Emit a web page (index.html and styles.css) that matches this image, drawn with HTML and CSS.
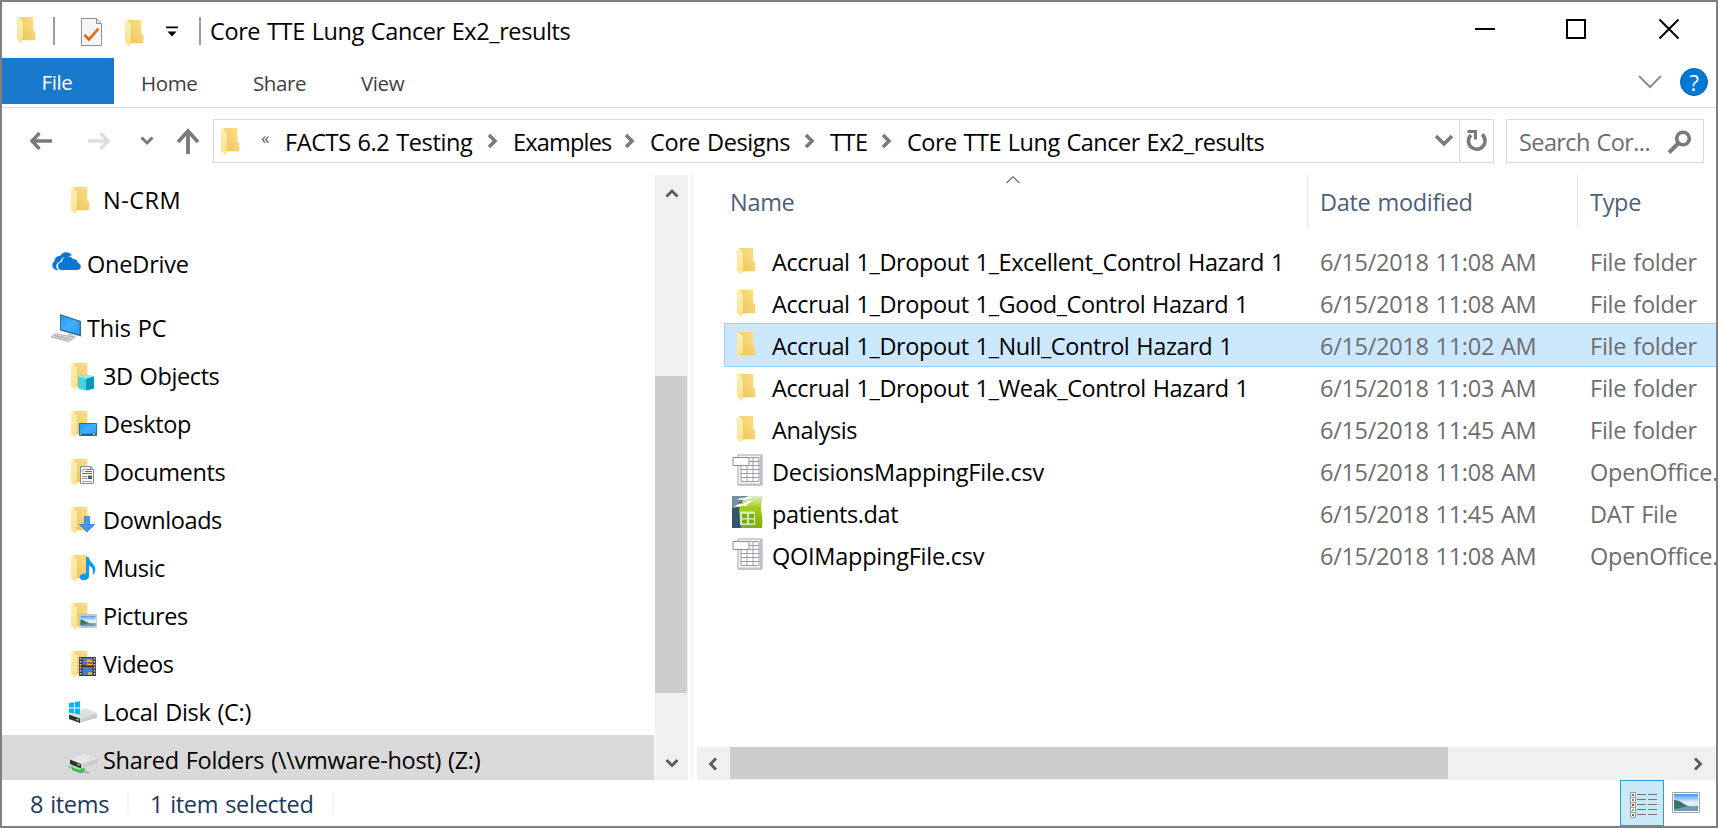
FILE: index.html
```html
<!DOCTYPE html>
<html lang="en">
<head>
<meta charset="utf-8">
<title>Core TTE Lung Cancer Ex2_results</title>
<link rel="stylesheet" href="styles.css">
</head>
<body>
<svg class="defs" width="0" height="0">
  <defs>
    <linearGradient id="gBack" x1="0" y1="1" x2="1" y2="0"><stop offset="0" stop-color="#e9c158"/><stop offset="1" stop-color="#ffe08a"/></linearGradient>
    <linearGradient id="gFront" x1="0" y1="0" x2="0" y2="1"><stop offset="0" stop-color="#ffeeb4"/><stop offset="1" stop-color="#ffe08c"/></linearGradient>
    <linearGradient id="gSky" x1="0" y1="0" x2="0" y2="1"><stop offset="0" stop-color="#4a93f0"/><stop offset=".5" stop-color="#e4f1fb"/><stop offset="1" stop-color="#c6dff2"/></linearGradient>
    <linearGradient id="gGreen" x1="0" y1="0" x2="0" y2="1"><stop offset="0" stop-color="#dfeccb"/><stop offset=".35" stop-color="#a3cf1c"/><stop offset="1" stop-color="#7fae12"/></linearGradient>
    <linearGradient id="gScreen" x1="0" y1="0" x2="1" y2="1"><stop offset="0" stop-color="#1a9bfb"/><stop offset=".5" stop-color="#43b0ff"/><stop offset="1" stop-color="#1a9bfb"/></linearGradient>
    <linearGradient id="gDisk" x1="0" y1="0" x2="1" y2="1"><stop offset="0" stop-color="#e2e3e5"/><stop offset="1" stop-color="#b4b6b8"/></linearGradient>
  </defs>
  <symbol id="folder" viewBox="0 0 19 27"><path d="M1 0H16.300V13L18.300 15V23.300H4V2z" fill="url(#gBack)"/><path d="M0 0L6 4.500V21.500L5 22.500V27L0 23z" fill="url(#gFront)"/></symbol>
  <symbol id="picture" viewBox="0 0 28 21"><path d="M.5.5h27v20H.5z" fill="#fff" stroke="#a3a3a3"/><path d="M2 2h24v17H2z" fill="url(#gSky)"/><path d="M2 8q5 0 10 4t14 2v1H2z" fill="#37785b"/><path d="M2 14.500h24V19H2z" fill="#6b9cba"/><path d="M2 14.500h12l-8 2H2z" fill="#386c6b"/></symbol>
  <symbol id="csv" viewBox="0 0 30 32">
    <path d="M5.500 1h24v30h-24z" fill="#f8f9fa" stroke="#a1a4a7"/><path d="M28.500 2v28.500h-23" fill="none" stroke="#bfc2c5" stroke-width="2"/>
    <path d="M8 12h19v16H8z" fill="#fff"/><path d="M17 3.500h9.500v24h-18V12M8 15.500h19M8 19.500h19M8 23.500h19M17 7.500h10M17 11.500h10M14.500 12v16M20.500 4v24" fill="none" stroke="#969fa9"/>
    <path d="M.5 3.500h16v8H.5z" fill="#fff" stroke="#8e8e8e"/>
  </symbol>
  <symbol id="angle" viewBox="0 0 12 16"><path d="M2 2l6 6-6 6" fill="none" stroke="#7a7a7a" stroke-width="3.600"/></symbol>
</svg>

<div class="window">
  <header class="titlebar">
    <svg class="ic folder t1"><use href="#folder"/></svg>
    <i class="bar b1"></i>
    <svg class="t2" width="22" height="30" viewBox="0 0 22 30"><path d="M.5 1.500h15l5 5v22H.5z" fill="#f4f7f9" stroke="#8f8f8f"/><path d="M15.500 1.500v5h5" fill="#dfe3e6" stroke="#8f8f8f"/><path d="M3.500 18l4.500 4.500L17.500 11.500" fill="none" stroke="#fa5c12" stroke-width="2.600"/></svg>
    <svg class="ic folder t3"><use href="#folder"/></svg>
    <svg class="t4" width="12" height="12" viewBox="0 0 12 12"><path d="M0 .500h12v1.800H0zM1.500 5.500h9L6 10.500z" fill="#000"/></svg>
    <i class="bar b2"></i>
    <h1 class="title">Core TTE Lung Cancer Ex2_results</h1>
    <div class="controls">
      <svg width="22" height="24" viewBox="0 0 22 24"><path d="M1 13h20" stroke="#000" stroke-width="2"/></svg>
      <svg width="22" height="24" viewBox="0 0 22 24"><path d="M1 4h18v18H1z" fill="none" stroke="#000" stroke-width="2"/></svg>
      <svg width="22" height="24" viewBox="0 0 22 24"><path d="M1.500 3.500l19 19M20.500 3.500l-19 19" stroke="#000" stroke-width="2"/></svg>
    </div>
  </header>
  <nav class="ribbon">
    <span class="file">File</span><span class="tab home">Home</span><span class="tab share">Share</span><span class="tab view">View</span>
    <svg class="expand" width="24" height="14" viewBox="0 0 24 14"><path d="M1 1l11 11L23 1" fill="none" stroke="#8e8e8e" stroke-width="2"/></svg>
    <span class="help">?</span>
  </nav>
  <div class="navbar">
    <div class="arrows">
      <svg width="24" height="20" viewBox="0 0 24 20"><path d="M23 10H4M10.500 2L3 10l7.500 8" fill="none" stroke="#7a7a7a" stroke-width="3.400"/></svg>
      <svg width="24" height="20" viewBox="0 0 24 20"><path d="M1 10h19M13.500 2l7.500 8-7.500 8" fill="none" stroke="#dedede" stroke-width="3.400"/></svg>
      <svg width="14" height="10" viewBox="0 0 14 10"><path d="M1.500 1.500L7 7l5.500-5.500" fill="none" stroke="#7a7a7a" stroke-width="3"/></svg>
      <svg width="24" height="26" viewBox="0 0 24 26"><path d="M12 26V4M2 14L12 3l10 11" fill="none" stroke="#7a7a7a" stroke-width="3.800"/></svg>
    </div>
    <div class="address">
      <svg class="ic folder"><use href="#folder"/></svg>
      <span class="more">«</span>
      <span class="crumb c1">FACTS 6.2 Testing</span><svg class="ang"><use href="#angle"/></svg>
      <span class="crumb c2">Examples</span><svg class="ang"><use href="#angle"/></svg>
      <span class="crumb c3">Core Designs</span><svg class="ang"><use href="#angle"/></svg>
      <span class="crumb c4">TTE</span><svg class="ang"><use href="#angle"/></svg>
      <span class="crumb c5">Core TTE Lung Cancer Ex2_results</span>
      <svg class="drop" width="20" height="14" viewBox="0 0 20 14"><path d="M2 2l8 8 8-8" fill="none" stroke="#7a7a7a" stroke-width="3.600"/></svg>
      <span class="refresh"><svg width="22" height="24" viewBox="0 0 22 24"><path d="M16 5.500A8.300 8.300 0 1 1 5 6" fill="none" stroke="#7a7a7a" stroke-width="3.600"/><path d="M1.500 2.500H9.500V10.500" fill="none" stroke="#7a7a7a" stroke-width="3"/></svg></span>
    </div>
    <div class="search"><span>Search Cor...</span><svg width="24" height="24" viewBox="0 0 24 24"><circle cx="15" cy="8.500" r="6.300" fill="none" stroke="#7a7a7a" stroke-width="3.600"/><path d="M10.500 13L1 22.500" stroke="#7a7a7a" stroke-width="4"/></svg></div>
  </div>
  <main class="body">
    <aside class="tree">
      <div class="node child gap"><svg class="ic" width="30" height="32"><use href="#folder" x="0" y="2" width="19" height="27"/></svg><span class="wide">N-CRM</span></div>
      <div class="node root gap"><svg class="ic" width="32" height="32" viewBox="0 0 32 32"><path d="M7 21H5.500A5 5 0 0 1 3.500 12a5 5 0 0 1 5.500-5A7 7 0 0 1 21 6.500a6 6 0 0 0-5 1.800 5 5 0 0 0-6.500 4A5 5 0 0 0 7 21z" fill="#0a75d8"/><path d="M11 21a4 4 0 0 1 0-8 6 6 0 0 1 11-3 5 5 0 0 1 5 4 3.600 3.600 0 0 1 0 7z" fill="#0a75d8"/></svg><span>OneDrive</span></div>
      <div class="node root"><svg class="ic" width="32" height="32" viewBox="0 0 32 32"><path d="M9 1l21 7v15.500L9 17.500z" fill="#3e6d86"/><path d="M10 2.500l18.500 6.500v12.500L10 16z" fill="url(#gScreen)"/><path d="M17 20l5 1.500v1.800l5.500-1L22 25l-6-2z" fill="#c3ccd2"/><path d="M4 20.500l20 4-7 4L0 24z" fill="#d4d9dc" stroke="#9da6ab" stroke-width=".7"/><path d="M3 22.500l17 4M7 22l-3 3M12 23l-4 3M17 24l-4 3" stroke="#9ba4a9" stroke-width=".7"/></svg><span>This PC</span></div>
      <div class="node child"><svg class="ic" width="30" height="32"><use href="#folder" x="0" y="2" width="19" height="27"/><path d="M7 15.500l8-2 8 2v12l-8 2-8-2z" fill="#48cfe0"/><path d="M7 15.500l8-2 8 2-8 2.500z" fill="#8deaf0"/><path d="M15 18l8-2.500v12l-8 2z" fill="#079bc0"/></svg><span>3D Objects</span></div>
      <div class="node child"><svg class="ic" width="30" height="32"><use href="#folder" x="0" y="2" width="19" height="27"/><path d="M8.500 14.500h17v12h-17z" fill="url(#gScreen)" stroke="#1473b5"/><path d="M9 25.500h16" stroke="#0b62a3" stroke-width="1.500"/><path d="M9 25.500h1M22 25.500h2" stroke="#fff"/></svg><span>Desktop</span></div>
      <div class="node child"><svg class="ic" width="30" height="32"><use href="#folder" x="0" y="2" width="19" height="27"/><path d="M9.500 9.500h10l3 3v14h-13z" fill="#fff" stroke="#8b8b8b"/><path d="M19.500 9.500v3h3" fill="none" stroke="#8b8b8b"/><path d="M11 14.500l3-3M15 12.500h4M14 14.500h7M11 16.500h10" stroke="#2486bd"/><path d="M11 19.500h5M11 21.500h5M11 24.500h10" stroke="#999"/><path d="M17 18.500h4V22h-4z" fill="#386c77"/></svg><span>Documents</span></div>
      <div class="node child"><svg class="ic" width="30" height="32"><use href="#folder" x="0" y="2" width="19" height="27"/><path d="M13.500 11.500h5v8h5L16 27l-7.500-7.500h5z" fill="#3f9be8" stroke="#2d7fca" stroke-width=".8"/></svg><span>Downloads</span></div>
      <div class="node child"><svg class="ic" width="30" height="32"><use href="#folder" x="0" y="2" width="19" height="27"/><path d="M15 4h2.500q1 4 4.500 7 4 4 1 10h-1.500q2-6-3.500-8.500V23q-.5 4-5 4.200-4 0-4.300-3 .3-4 6.300-3.700z" fill="#089bf2"/></svg><span>Music</span></div>
      <div class="node child"><svg class="ic" width="30" height="32"><use href="#folder" x="0" y="2" width="19" height="27"/><use href="#picture" x="8" y="13" width="18" height="14"/></svg><span>Pictures</span></div>
      <div class="node child"><svg class="ic" width="30" height="32"><use href="#folder" x="0" y="2" width="19" height="27"/><path d="M8 8h17v19H8z" fill="#3c3a3a"/><path d="M11.500 9h10v8h-10zM11.500 18h10v8h-10z" fill="#437bd6"/><path d="M9.500 9v18M23.500 9v18" stroke="#d8d8d8" stroke-width="1.500" stroke-dasharray="1.500 1.500"/><path d="M15.500 12h6M15.500 15.500h6M17 24.500h4" stroke="#e3bd2d" stroke-width="2.500"/><path d="M12 15h4M17 13.800h4" stroke="#c04540" stroke-width="1.800"/><path d="M11.500 17h10" stroke="#222"/></svg><span>Videos</span></div>
      <div class="node child disk"><svg class="ic" width="32" height="32" viewBox="0 0 32 32"><path d="M2 17.500L18 11l12 5-17 5.500z" fill="#dfe0e2"/><path d="M13 21.500L30 16v4.500L13 26z" fill="url(#gDisk)"/><path d="M2 17.500l11 4V26L2 22z" fill="#313131"/><path d="M9 22.300l3 1" stroke="#47d543" stroke-width="1.500"/><path d="M2 6l5-.8v5.300H2zM8 5l5-.8v6.300H8zM2 11.500h5v5l-5-.8zM8 11.500h5v6l-5-.8z" fill="#00b9f2"/></svg><span>Local Disk (C:)</span></div>
      <div class="node child disk selected"><svg class="ic" width="32" height="32" viewBox="0 0 32 32"><path d="M3 14.500l14-6 14 5-17 5.500z" fill="#e4e5e8"/><path d="M14 19l17-5.500v4L14 23.500z" fill="url(#gDisk)"/><path d="M3 14.500L14 19v4.500L3 19z" fill="#303030"/><path d="M10 19.300l3 1" stroke="#47d543" stroke-width="1.500"/><path d="M4 21l8 2 6 .5v4L13 28l-8-3z" fill="#3aba50"/><path d="M6 22l8 2.500" stroke="#a1efa8" stroke-width="1.500"/><path d="M1 20.500l3 1v2l-3-1zM16 25l6 1v3l-5-1z" fill="#b5b8bb"/></svg><span>Shared Folders (\\vmware-host) (Z:)</span></div>
    </aside>
    <div class="vscroll">
      <svg width="14" height="12" viewBox="0 0 14 12"><path d="M1.500 9.500L7 4l5.500 5.500" fill="none" stroke="#5b5b5b" stroke-width="2.800"/></svg>
      <i class="vthumb"></i>
      <svg width="14" height="12" viewBox="0 0 14 12"><path d="M1.500 3L7 8.500 12.500 3" fill="none" stroke="#5b5b5b" stroke-width="2.800"/></svg>
    </div>
    <i class="split"></i>
    <section class="pane">
      <div class="head">
        <span class="hname">Name<svg class="sort" width="14" height="8" viewBox="0 0 14 8"><path d="M.500 7L7 .800 13.500 7" fill="none" stroke="#6b6b6b" stroke-width="1.200"/></svg></span><span class="hdate">Date modified</span><span class="htype">Type</span>
      </div>
      <div class="rows">
        <div class="row"><svg class="ic folder"><use href="#folder"/></svg><span class="name">Accrual 1_Dropout 1_Excellent_Control Hazard 1</span><span class="date">6/15/2018 11:08 AM</span><span class="type">File folder</span></div>
        <div class="row"><svg class="ic folder"><use href="#folder"/></svg><span class="name">Accrual 1_Dropout 1_Good_Control Hazard 1</span><span class="date">6/15/2018 11:08 AM</span><span class="type">File folder</span></div>
        <div class="row active"><svg class="ic folder"><use href="#folder"/></svg><span class="name">Accrual 1_Dropout 1_Null_Control Hazard 1</span><span class="date">6/15/2018 11:02 AM</span><span class="type">File folder</span></div>
        <div class="row"><svg class="ic folder"><use href="#folder"/></svg><span class="name">Accrual 1_Dropout 1_Weak_Control Hazard 1</span><span class="date">6/15/2018 11:03 AM</span><span class="type">File folder</span></div>
        <div class="row"><svg class="ic folder"><use href="#folder"/></svg><span class="name">Analysis</span><span class="date">6/15/2018 11:45 AM</span><span class="type">File folder</span></div>
        <div class="row"><svg class="ic doc"><use href="#csv"/></svg><span class="name mapping">DecisionsMappingFile.csv</span><span class="date">6/15/2018 11:08 AM</span><span class="type">OpenOffice.</span></div>
        <div class="row"><svg class="ic doc" viewBox="0 0 31 32"><path d="M0 0h31q-3 8-1.500 16T30 32H0z" fill="url(#gGreen)"/><path d="M0 0h12q-3 8-5 14 1 10 2 18H0z" fill="#33566b"/><path d="M0 0h16l-5 4L0 12z" fill="#73909e"/><path d="M1 12q5-6 10-4 5-5 11-3-5 1-8 5-4-1-6 1-3-1-7 1zM5 4q4-3 7-2 5-2 9 0-5 0-7 2-4-1-9 0z" fill="#fff"/><path d="M8 15.500h15V29H8z" fill="#d7edb2"/><path d="M10 18h5v4h-5zM17 18h5v4h-5zM10 23.500h5v4h-5zM17 23.500h5v4h-5z" fill="#79ab16"/></svg><span class="name">patients.dat</span><span class="date">6/15/2018 11:45 AM</span><span class="type">DAT File</span></div>
        <div class="row"><svg class="ic doc"><use href="#csv"/></svg><span class="name mapping">QOIMappingFile.csv</span><span class="date">6/15/2018 11:08 AM</span><span class="type">OpenOffice.</span></div>
      </div>
      <div class="hscroll">
        <svg width="12" height="14" viewBox="0 0 12 14"><path d="M9 1.500L3.500 7 9 12.500" fill="none" stroke="#5b5b5b" stroke-width="2.800"/></svg>
        <i class="hthumb"></i>
        <svg width="12" height="14" viewBox="0 0 12 14"><path d="M3 1.500L8.500 7 3 12.500" fill="none" stroke="#5b5b5b" stroke-width="2.800"/></svg>
      </div>
    </section>
  </main>
  <footer class="status">
    <span class="count">8 items</span><span class="chosen">1 item selected</span>
    <div class="views">
      <span class="details"><svg width="28" height="26" viewBox="0 0 28 26"><path d="M.5.5h5v25h-5zM.5 5.500h5M.5 10.500h5M.5 15.500h5M.5 20.500h5" fill="#fff" stroke="#999"/><path d="M2 2h2v2H2zM2 22h2v2H2z" fill="#3c80a4"/><path d="M2 7h2v2H2z" fill="#a06f42"/><path d="M2 12h2v2H2z" fill="#c5252a"/><path d="M2 17h2v2H2z" fill="#8bb45c"/><path d="M7 2.500h9M18 2.500h9M7 7.500h9M18 7.500h9M7 12.500h9M18 12.500h9M7 17.500h9M18 17.500h9M7 22.500h9M18 22.500h9" stroke="#757575"/></svg></span>
      <svg class="thumbs" width="28" height="21"><use href="#picture"/></svg>
    </div>
  </footer>
</div>
</body>
</html>
```
FILE: styles.css
```css
* { box-sizing: border-box; }
body { margin: 0; overflow: hidden; }
.defs { position: absolute; }
svg { display: block; flex: none; }
i { display: block; flex: none; }
.window { width: 1718px; height: 828px; border: 2px solid #7f7f7f; background: #fff; display: flex; flex-direction: column; overflow: hidden; font: 23.5px/34px "Open Sans", "Noto Sans", sans-serif; color: #000; white-space: nowrap; letter-spacing: -0.4px; word-spacing: 1.2px; }
.folder { width: 19px; height: 27px; }

.titlebar { height: 56px; flex: none; display: flex; align-items: flex-start; padding-left: 15px; }
.t1 { margin-top: 15px; }
.bar { width: 2px; height: 28px; margin-top: 15px; background: #9b9b9b; }
.b1 { margin-left: 17px; }
.t2 { margin: 15px 0 0 26px; }
.t3 { margin: 18px 0 0 22px; }
.t4 { margin: 24px 0 0 22px; }
.b2 { margin-left: 21px; }
.title { margin: 12px 0 0 9px; font: inherit; }
.controls { margin: 14px 36px 0 auto; display: flex; gap: 70px; }

.ribbon { height: 50px; flex: none; display: flex; border-bottom: 1px solid #dadbdc; font-size: 20.5px; color: #3f3f3f; line-height: 50px; }
.file { width: 111px; height: 46px; background: #1979ca; color: #fff; text-align: center; line-height: 48px; padding-right: 1px; margin-right: 1px; box-shadow: 1px 0 #1979ca; }
.tab { flex: none; }
.home { margin-left: 27px; width: 112px; }
.share { width: 108px; }
.expand { margin: 17px 18px 0 auto; }
.help { width: 28px; height: 28px; border-radius: 50%; margin: 10px 8px 0 0; background: #0078d7; border: 1px solid #0b62ab; color: #fff; font-size: 22px; line-height: 26px; text-align: center; }

.navbar { height: 67px; flex: none; display: flex; padding-top: 11px; }
.arrows { width: 211px; flex: none; padding-left: 27px; display: flex; height: 44px; align-items: center; }
.arrows svg:nth-child(2) { margin-left: 34px; }
.arrows svg:nth-child(3) { margin-left: 29px; }
.arrows svg:nth-child(4) { margin-left: 22px; }
.address { width: 1281px; height: 44px; border: 1px solid #d9d9d9; display: flex; align-items: center; padding-left: 7px; }
.more { font-size: 17px; color: #555; margin-left: 21px; width: 24px; line-height: 38px; padding-bottom: 6px; }
.crumb { flex: none; padding-top: 1px; }
.c1 { width: 202px; } .c2 { width: 111px; letter-spacing: -0.8px; } .c3 { width: 154px; } .c4 { width: 51px; }
.c5 { letter-spacing: -0.5px; }
.ang { width: 12px; height: 16px; margin-right: 14px; }
.drop { margin-left: auto; margin-right: 5px; }
.refresh { width: 34px; height: 42px; border-left: 1px solid #d9d9d9; display: flex; align-items: center; justify-content: center; }
.search { width: 198px; height: 44px; margin-left: 12px; border: 1px solid #d9d9d9; display: flex; align-items: center; justify-content: space-between; padding: 1px 11px 0 12px; color: #6d6d6d; letter-spacing: -0.6px; }

.body { height: 605px; flex: none; display: flex; }
.tree { width: 652px; height: 605px; overflow: hidden; flex: none; }
.node { height: 48px; display: flex; align-items: flex-start; line-height: 34px; }
.node .ic { margin-top: 10px; }
.node span { padding-top: 8px; }
.node .wide { letter-spacing: 0.5px; }
.gap { margin-bottom: 16px; }
.child { padding-left: 69px; gap: 2px; }
.root { padding-left: 49px; gap: 4px; letter-spacing: -0.2px; }
.disk { padding-left: 65px; gap: 4px; letter-spacing: -0.3px; }
.selected { background: #d9d9d9; }
.vscroll { width: 33px; margin-left: 1px; background: #f0f0f0; display: flex; flex-direction: column; align-items: center; flex: none; padding-top: 12px; }
.vthumb { width: 32px; height: 317px; margin: 177px 1px 64px 0; background: #cdcdcd; }
.split { width: 2px; margin-left: 3px; background: #f5f5f5; }
.pane { flex: 1; display: flex; flex-direction: column; min-width: 0; margin-left: 4px; overflow: hidden; }
.head { height: 52px; display: flex; flex: none; color: #4c607a; letter-spacing: -0.3px; }
.head span { padding-top: 10px; flex: none; }
.hname { width: 610px; padding-left: 33px; position: relative; }
.sort { position: absolute; left: 309px; top: 1px; }
.hdate { width: 270px; border-left: 1px solid #e5e5e5; padding-left: 12px; }
.htype { border-left: 1px solid #e5e5e5; padding-left: 12px; }
.rows { margin-top: 13px; flex: 1; padding-left: 27px; }
.row { height: 42px; display: flex; align-items: flex-start; padding: 0 0 0 8px; }
.row .ic { margin-top: 8px; }
.row .folder { margin-left: 5px; margin-right: 16px; }
.row .doc { width: 31px; height: 32px; margin-top: 4px; margin-right: 9px; }
.row span { padding-top: 5px; flex: none; }
.name { width: 548px; }
.mapping { letter-spacing: -0.25px; }
.date { width: 270px; color: #6d6d6d; letter-spacing: -0.3px; }
.type { color: #6d6d6d; letter-spacing: -0.25px; }
.active { background: #cce8ff; box-shadow: inset 1px 0 #99d1ff, 0 -1px #99d1ff, 0 1px #99d1ff; }
.hscroll { height: 33px; flex: none; background: #f0f0f0; display: flex; align-items: center; padding: 0 12px 0 10px; }
.hthumb { width: 718px; height: 32px; margin: 0 auto 1px 11px; background: #cdcdcd; }

.status { height: 46px; display: flex; color: #1e395b; align-items: flex-start; padding-left: 28px; letter-spacing: -0.3px; }
.status span { flex: none; }
.count, .chosen { border-right: 2px solid #f5f5f5; height: 22px; margin-top: 12px; line-height: 24px; }
.count { width: 99px; }
.chosen { width: 205px; padding-left: 21px; }
.views { margin-left: auto; display: flex; margin-right: 16px; }
.details { width: 44px; height: 46px; border: 1px solid #26a0da; background: #cbe8f6; padding: 11px 0 0 9px; }
.thumbs { margin: 12px 0 0 8px; }
```
